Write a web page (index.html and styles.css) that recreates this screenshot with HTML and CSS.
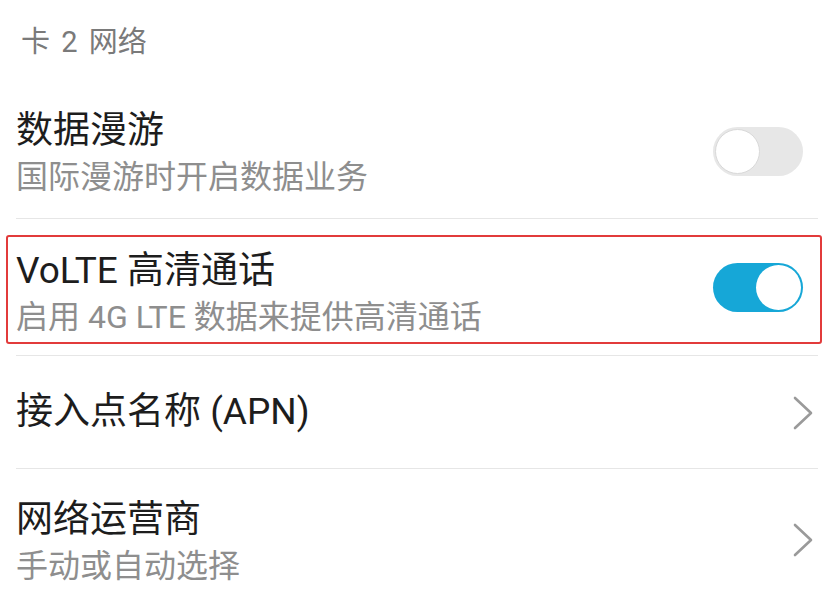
FILE: index.html
```html
<!DOCTYPE html>
<html lang="zh-CN">
<head>
<meta charset="utf-8">
<link rel="stylesheet" href="styles.css">
</head>
<body>
<div class="page">
  <div class="section-title">卡 2 网络</div>
  <div class="list">
    <div class="row row-first">
      <div class="text">
        <div class="title">数据漫游</div>
        <div class="sub">国际漫游时开启数据业务</div>
      </div>
      <span class="switch"></span>
    </div>
    <div class="row row-hl">
      <div class="highlight">
        <div class="text">
          <div class="title">VoLTE 高清通话</div>
          <div class="sub">启用 4G LTE 数据来提供高清通话</div>
        </div>
        <span class="switch on"></span>
      </div>
    </div>
    <div class="row row-single">
      <div class="text">
        <div class="title">接入点名称 (APN)</div>
      </div>
      <svg class="chevron" viewBox="0 0 22 34" width="22" height="34"><path d="M3 2 L19 17 L3 32" fill="none" stroke="#9a9a9a" stroke-width="2.6" stroke-linecap="round" stroke-linejoin="round"/></svg>
    </div>
    <div class="row row-last">
      <div class="text">
        <div class="title">网络运营商</div>
        <div class="sub">手动或自动选择</div>
      </div>
      <svg class="chevron" viewBox="0 0 22 34" width="22" height="34"><path d="M3 2 L19 17 L3 32" fill="none" stroke="#9a9a9a" stroke-width="2.6" stroke-linecap="round" stroke-linejoin="round"/></svg>
    </div>
  </div>
</div>
</body>
</html>
```

FILE: styles.css
```css
html, body {
  margin: 0;
  padding: 0;
  background: #ffffff;
}
body {
  font-family: "Roboto", "Noto Sans CJK SC", sans-serif;
  width: 835px;
  height: 596px;
  overflow: hidden;
}
.page {
  display: flex;
  flex-direction: column;
}
.section-title {
  font-size: 29px;
  line-height: 40px;
  color: #7a7a7a;
  padding: 22px 0 18px 21px;
  word-spacing: 4px;
}
.list {
  padding: 0 17px 0 16px;
  display: flex;
  flex-direction: column;
}
.row {
  display: flex;
  align-items: center;
  justify-content: space-between;
  border-bottom: 1px solid #e6e6e6;
}
.row-first {
  padding: 27px 15px 18px 0;
}
.row-first .switch {
  margin-bottom: 4px;
}
.row-hl {
  display: block;
  padding: 16px 0 11px 0;
  margin: 0 -4px 0 -10px;
  border-bottom: none;
}
.row-hl + .row {
  border-top: 1px solid #e6e6e6;
}
.highlight {
  display: flex;
  align-items: center;
  justify-content: space-between;
  border: 2px solid #e23b3b;
  border-radius: 3px;
  padding: 10px 17px 2px 8px;
}
.row-single {
  padding: 32px 4px 33px 0;
}
.row-last {
  padding: 27px 4px 18px 0;
  border-bottom: none;
}
.text {
  display: flex;
  flex-direction: column;
}
.title {
  font-size: 37px;
  line-height: 47px;
  color: #1d1d1d;
  white-space: nowrap;
}
.sub {
  font-size: 32px;
  line-height: 46px;
  color: #8e8e8e;
  white-space: nowrap;
}
.switch {
  position: relative;
  flex: none;
  width: 90px;
  height: 49px;
  border-radius: 25px;
  background: #e7e7e7;
  box-sizing: border-box;
}
.switch::after {
  content: "";
  position: absolute;
  top: 2px;
  left: 2px;
  width: 45px;
  height: 45px;
  border-radius: 50%;
  background: #ffffff;
  box-sizing: border-box;
  border: 1px solid #d9d9d9;
}
.switch.on {
  background: #16a7d7;
  margin-bottom: 12px;
}
.switch.on::after {
  left: auto;
  right: 2px;
  border: none;
}
.chevron {
  flex: none;
  display: block;
}
.row-single .chevron {
  margin-top: 2px;
}
.row-last .chevron {
  margin-bottom: 6px;
}
```
